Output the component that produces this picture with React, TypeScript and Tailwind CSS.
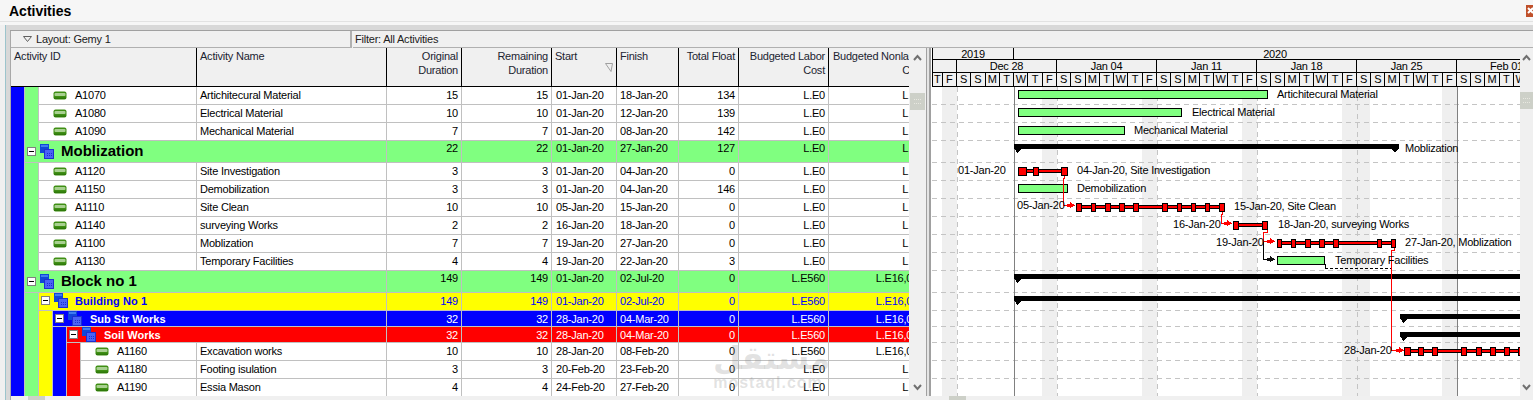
import React from "react";

type Row = {
  strips: string[];
  kind: "leaf" | "group";
  h: string;
  id?: string;
  title?: string;
  titleCls?: string;
  name?: string;
  vals: string[];
  bg?: string;
  text?: string;
};

const BLUE = "bg-[#0000ff]";
const GREEN = "bg-[#80ff80]";
const YEL = "bg-[#ffff00]";
const RED = "bg-[#ff0000]";

const leaf = (strips: string[], id: string, name: string, vals: string[]): Row => ({ strips, kind: "leaf", h: "h-[18px]", id, name, vals });

const A = [BLUE, GREEN];
const B = [BLUE, GREEN, YEL, BLUE, RED];

const rows: Row[] = [
  leaf(A, "A1070", "Artichitecural Material", ["15", "15", "01-Jan-20", "18-Jan-20", "134", "L.E0", "L.E0"]),
  leaf(A, "A1080", "Electrical Material", ["10", "10", "01-Jan-20", "12-Jan-20", "139", "L.E0", "L.E0"]),
  leaf(A, "A1090", "Mechanical Material", ["7", "7", "01-Jan-20", "08-Jan-20", "142", "L.E0", "L.E0"]),
  { strips: [BLUE], kind: "group", h: "h-[22px]", title: "Moblization", titleCls: "text-[15px] tracking-normal font-bold text-black pl-[36px] leading-[20px]", vals: ["22", "22", "01-Jan-20", "27-Jan-20", "127", "L.E0", "L.E0"], bg: GREEN, text: "text-black leading-[15px]" },
  leaf(A, "A1120", "Site Investigation", ["3", "3", "01-Jan-20", "04-Jan-20", "0", "L.E0", "L.E0"]),
  leaf(A, "A1150", "Demobilization", ["3", "3", "01-Jan-20", "04-Jan-20", "146", "L.E0", "L.E0"]),
  leaf(A, "A1110", "Site Clean", ["10", "10", "05-Jan-20", "15-Jan-20", "0", "L.E0", "L.E0"]),
  leaf(A, "A1140", "surveying Works", ["2", "2", "16-Jan-20", "18-Jan-20", "0", "L.E0", "L.E0"]),
  leaf(A, "A1100", "Moblization", ["7", "7", "19-Jan-20", "27-Jan-20", "0", "L.E0", "L.E0"]),
  leaf(A, "A1130", "Temporary Facilities", ["4", "4", "19-Jan-20", "22-Jan-20", "3", "L.E0", "L.E0"]),
  { strips: [BLUE], kind: "group", h: "h-[22px]", title: "Block no 1", titleCls: "text-[15px] tracking-normal font-bold text-black pl-[36px] leading-[20px]", vals: ["149", "149", "01-Jan-20", "02-Jul-20", "0", "L.E560", "L.E16,000"], bg: GREEN, text: "text-black leading-[15px]" },
  { strips: [BLUE, GREEN], kind: "group", h: "h-[18px]", title: "Building No 1", titleCls: "text-[11px] tracking-[0.1px] font-bold text-[#0000ff] pl-[36px] leading-[17px]", vals: ["149", "149", "01-Jan-20", "02-Jul-20", "0", "L.E560", "L.E16,000"], bg: YEL, text: "text-[#0000ff] leading-[17px]" },
  { strips: [BLUE, GREEN, YEL], kind: "group", h: "h-[16px]", title: "Sub Str Works", titleCls: "text-[11px] tracking-normal font-bold text-white pl-[37px] leading-[16px]", vals: ["32", "32", "28-Jan-20", "04-Mar-20", "0", "L.E560", "L.E16,000"], bg: BLUE, text: "text-white leading-[16px]" },
  { strips: [BLUE, GREEN, YEL, BLUE], kind: "group", h: "h-[16px]", title: "Soil Works", titleCls: "text-[11px] tracking-normal font-bold text-white pl-[37px] leading-[16px]", vals: ["32", "32", "28-Jan-20", "04-Mar-20", "0", "L.E560", "L.E16,000"], bg: RED, text: "text-white leading-[16px]" },
  leaf(B, "A1160", "Excavation works", ["10", "10", "28-Jan-20", "08-Feb-20", "0", "L.E560", "L.E16,000"]),
  leaf(B, "A1180", "Footing isulation", ["3", "3", "20-Feb-20", "23-Feb-20", "0", "L.E0", "L.E0"]),
  leaf(B, "A1190", "Essia Mason", ["4", "4", "24-Feb-20", "27-Feb-20", "0", "L.E0", "L.E0"]),
];

const valCols = [
  "w-[75px] text-right pr-[3px]",
  "w-[90px] text-right pr-[3px]",
  "w-[65px] text-left pl-[4px]",
  "w-[62px] text-left pl-[3px]",
  "w-[60px] text-right pr-[3px]",
  "w-[90px] text-right pr-[3px]",
  "w-[98px] text-right pr-[3px]",
];

const TaskIcon = () => (
  <svg width="14" height="9" viewBox="0 0 14 9" className="shrink-0">
    <rect x="0.5" y="0.5" width="13" height="8" rx="2" fill="#3f8f14" />
    <rect x="1.5" y="2" width="11" height="3" rx="1" fill="#a8d090" />
    <rect x="1" y="6.5" width="12" height="1.5" fill="#2f7a0a" />
  </svg>
);

const GroupIcon = () => (
  <svg width="14" height="15" viewBox="0 0 14 15" className="shrink-0" shapeRendering="crispEdges">
    <rect x="0" y="0" width="9" height="9" fill="#1047d8" />
    <rect x="1" y="1" width="7" height="2" fill="#3f7cf0" />
    <rect x="4" y="5" width="10" height="10" fill="#1c2fd0" />
    <rect x="5" y="6" width="8" height="8" fill="#4a63f5" />
    <rect x="7" y="9" width="1" height="1" fill="#1c2fd0" />
    <rect x="9" y="9" width="1" height="1" fill="#1c2fd0" />
    <rect x="11" y="9" width="1" height="1" fill="#1c2fd0" />
    <rect x="7" y="11" width="1" height="1" fill="#1c2fd0" />
    <rect x="9" y="11" width="1" height="1" fill="#1c2fd0" />
    <rect x="11" y="11" width="1" height="1" fill="#1c2fd0" />
  </svg>
);

const MinusBox = () => (
  <div className="w-[9px] h-[9px] border border-[#808080] bg-white flex items-center justify-center shrink-0">
    <div className="w-[5px] h-px bg-black" />
  </div>
);

const Chevron = ({ down }: { down?: boolean }) => (
  <svg width="9" height="7" viewBox="0 0 9 7" className="block">
    <polyline points={down ? "1,1 4.5,5 8,1" : "1,6 4.5,2 8,6"} fill="none" stroke="#707070" strokeWidth="2" />
  </svg>
);

const Thumb = ({ cls }: { cls: string }) => (
  <div className={"bg-[#cdd0c8] flex items-center justify-center " + cls}>
    <div className="w-[7px] h-[5px] border-y border-dotted border-[#e8e8e0]" />
  </div>
);

const RowView = ({ r }: { r: Row }) => (
  <div className={"flex " + r.h}>
    {r.strips.map((s, i) => (
      <div key={i} className={"w-[14px] shrink-0 border-r border-[#c0c0c0] " + s} />
    ))}
    <div className={"flex-1 flex border-b border-[#c0c0c0] min-w-0 " + (r.bg ?? "bg-white") + " " + (r.text ?? "text-black leading-[17px]")}>
      {r.kind === "leaf" ? (
        <>
          <div style={{ width: 186 - 14 * r.strips.length }} className="shrink-0 relative flex items-center pl-[14px] border-r border-[#c0c0c0] gap-[8px]">
            <TaskIcon />
            <span>{r.id}</span>
          </div>
          <div className="w-[190px] shrink-0 pl-[3px] border-r border-[#c0c0c0] whitespace-nowrap">{r.name}</div>
        </>
      ) : (
        <div style={{ width: 376 - 14 * r.strips.length }} className="shrink-0 relative flex items-start border-r border-[#c0c0c0] whitespace-nowrap">
          <div className={"flex items-center gap-[4px] pl-[2px] absolute top-0 left-0 " + (r.h === "h-[22px]" ? "h-[20px]" : "h-[15px]")}>
            <MinusBox />
            <GroupIcon />
          </div>
          <span className={r.titleCls}>{r.title}</span>
        </div>
      )}
      {r.vals.map((v, i) => (
        <div key={i} className={"shrink-0 whitespace-nowrap " + valCols[i] + (i < 6 ? " border-r border-[#c0c0c0]" : "")}>
          {v}
        </div>
      ))}
    </div>
  </div>
);

const HeadCell = ({ cls, lines, children }: { cls: string; lines: string[]; children?: React.ReactNode }) => (
  <div className={"relative shrink-0 h-full border-r border-black pt-[1px] leading-[14px] whitespace-nowrap text-[#1c2430] " + cls}>
    {lines.map((l, i) => (
      <div key={i}>{l}</div>
    ))}
    {children}
  </div>
);

const days = ["S", "S", "M", "T", "W", "T", "F"];
const dayCells: string[] = ["T", "F"];
for (let w = 0; w < 9; w++) dayCells.push(...days);

const Timeline = () => (
  <div className="h-[39px] flex flex-col bg-[#f0f0f0] text-black overflow-hidden border-b border-l border-black leading-[12px]">
    <div className="h-[12px] flex border-b border-black">
      <div className="w-[81px] shrink-0 text-center border-r border-black">2019</div>
      <div className="w-[522px] shrink-0 text-center">2020</div>
    </div>
    <div className="h-[13px] flex border-b border-black">
      <div className="w-[24px] shrink-0 border-r border-black" />
      {["Dec 28", "Jan 04", "Jan 11", "Jan 18", "Jan 25", "Feb 01"].map((m) => (
        <div key={m} className="w-[100px] shrink-0 text-center border-r border-black">
          {m}
        </div>
      ))}
    </div>
    <div className="h-[13px] flex">
      {dayCells.map((d, i) => (
        <div key={i} style={{ width: i === 0 ? 9.7 : 14.2857 }} className="shrink-0 text-center border-r border-black">
          {d}
        </div>
      ))}
    </div>
  </div>
);

const gridY = [104, 122, 140, 162, 180, 198, 216, 234, 252, 270, 292, 310, 326, 342, 360, 378];
const bands: [number, number][] = [[942, 957], [1042, 1057], [1142, 1157], [1242, 1257], [1342, 1370], [1442, 1457]];

const Bar = ({ x1, x2, y }: { x1: number; x2: number; y: number }) => (
  <rect x={x1 + 0.5} y={y + 0.5} width={x2 - x1 - 1} height={8} fill="#80ff80" stroke="#000" />
);

const Summary = ({ x1, x2, y, endTri = true }: { x1: number; x2: number; y: number; endTri?: boolean }) => (
  <g>
    <rect x={x1} y={y} width={x2 - x1} height={5} fill="#000" />
    <polygon points={`${x1},${y + 4} ${x1 + 8},${y + 4} ${x1 + 3.5},${y + 9}`} fill="#000" />
    {endTri && <polygon points={`${x2 - 8},${y + 4} ${x2},${y + 4} ${x2 - 4},${y + 9}`} fill="#000" />}
  </g>
);

const Chain = ({ x1, x2, y, marks }: { x1: number; x2: number; y: number; marks: [number, number][] }) => (
  <g>
    <rect x={x1} y={y + 2} width={x2 - x1} height={4} fill="#000" />
    <rect x={x1} y={y + 3} width={x2 - x1} height={2} fill="#ff0000" />
    {marks.map(([a, b], i) => (
      <rect key={i} x={a + 0.5} y={y + 0.5} width={b - a} height={8} fill="#ff0000" stroke="#000" />
    ))}
  </g>
);

const Arrow = ({ x, y, c = "#ff0000" }: { x: number; y: number; c?: string }) => (
  <g>
    <rect x={x} y={y - 1} width={4} height={3} fill={c} />
    <polygon points={`${x + 3},${y - 3} ${x + 8},${y + 0.5} ${x + 3},${y + 3}`} fill={c} />
  </g>
);

const Label = ({ x, y, children }: { x: number; y: number; children: React.ReactNode }) => (
  <text x={x} y={y + 4} fill="#000" className="text-[11px] tracking-[-0.22px]" style={{ fontFamily: '"Liberation Sans", sans-serif' }}>
    {children}
  </text>
);

const Gantt = () => (
  <svg width="588" height="309" viewBox="932 87 588 309" className="block" shapeRendering="crispEdges">
    {bands.map(([a, b]) => (
      <rect key={a} x={a} y={87} width={b - a} height={309} fill="#efefef" />
    ))}
    {gridY.map((y) => (
      <line key={y} x1={932} x2={1520} y1={y + 0.5} y2={y + 0.5} stroke="#c4c4c4" strokeDasharray="5 4" />
    ))}
    {[957, 1057, 1157, 1257, 1357].map((x) => (
      <line key={x} x1={x + 0.5} x2={x + 0.5} y1={87} y2={396} stroke="#c4c4c4" strokeDasharray="5 4" />
    ))}
    <line x1={1014.5} x2={1014.5} y1={87} y2={396} stroke="#808080" />
    <line x1={1457.5} x2={1457.5} y1={87} y2={396} stroke="#808080" />

    <Bar x1={1018} x2={1268} y={90} />
    <Bar x1={1018} x2={1182} y={108} />
    <Bar x1={1018} x2={1125} y={126} />
    <Bar x1={1018} x2={1068} y={184} />
    <Bar x1={1277} x2={1325} y={256} />

    <Summary x1={1014} x2={1399} y={144} />
    <Summary x1={1014} x2={1520} y={274} endTri={false} />
    <Summary x1={1014} x2={1520} y={296} endTri={false} />
    <Summary x1={1400} x2={1520} y={314} endTri={false} />
    <Summary x1={1400} x2={1520} y={332} endTri={false} />

    <polyline points="1064.5,175 1064.5,178 1063.5,178 1063.5,205 1068,205" fill="none" stroke="#ff0000" />
    <polyline points="1222.5,211 1222.5,214 1221.5,214 1221.5,223 1225,223" fill="none" stroke="#ff0000" />
    <polyline points="1263.5,241 1263.5,259 1268,259" fill="none" stroke="#000" />
    <polyline points="1267.5,229 1267.5,232 1263.5,232 1263.5,241 1268,241" fill="none" stroke="#ff0000" />
    <polyline points="1325.5,264 1325.5,268.5" fill="none" stroke="#000" />
    <line x1={1325} x2={1391} y1={268.5} y2={268.5} stroke="#000" strokeDasharray="3 2" />
    <polyline points="1394.5,247 1394.5,250 1391.5,250 1391.5,350 1396,350" fill="none" stroke="#ff0000" />

    <Arrow x={1067} y={205} />
    <Arrow x={1224} y={223} />
    <Arrow x={1267} y={241} />
    <Arrow x={1267} y={259} c="#111" />
    <Arrow x={1396} y={350} />

    <Chain x1={1020} x2={1066} y={167} marks={[[1018, 1026], [1033, 1038], [1061, 1067]]} />
    <Chain x1={1078} x2={1224} y={203} marks={[[1076, 1081], [1091, 1095], [1105, 1110], [1119, 1124], [1133, 1138], [1162, 1167], [1177, 1181], [1191, 1195], [1205, 1209], [1219, 1224]]} />
    <Chain x1={1234} x2={1266} y={221} marks={[[1233, 1238], [1262, 1267]]} />
    <Chain x1={1278} x2={1394} y={239} marks={[[1277, 1281], [1291, 1295], [1305, 1310], [1319, 1324], [1333, 1338], [1377, 1381], [1391, 1395]]} />
    <Chain x1={1405} x2={1520} y={347} marks={[[1404, 1410], [1418, 1423], [1432, 1437], [1461, 1466], [1476, 1481], [1490, 1495], [1504, 1509], [1518, 1524]]} />

    <g shapeRendering="auto">
      <Label x={1277} y={94}>Artichitecural Material</Label>
      <Label x={1192} y={112}>Electrical Material</Label>
      <Label x={1134} y={130}>Mechanical Material</Label>
      <Label x={1405} y={148}>Moblization</Label>
      <Label x={958} y={170}>01-Jan-20</Label>
      <Label x={1077} y={170}>04-Jan-20, Site Investigation</Label>
      <Label x={1077} y={188}>Demobilization</Label>
      <Label x={1017} y={205}>05-Jan-20</Label>
      <Label x={1234} y={206}>15-Jan-20, Site Clean</Label>
      <Label x={1173} y={224}>16-Jan-20</Label>
      <Label x={1278} y={224}>18-Jan-20, surveying Works</Label>
      <Label x={1216} y={242}>19-Jan-20</Label>
      <Label x={1405} y={242}>27-Jan-20, Moblization</Label>
      <Label x={1335} y={260}>Temporary Facilities</Label>
      <Label x={1344} y={350}>28-Jan-20</Label>
    </g>
  </svg>
);

export default function App() {
  return (
    <div className="relative w-[1533px] h-[400px] overflow-hidden bg-[#f0f0f0] text-[11px] tracking-[-0.22px] text-black" style={{ fontFamily: '"Liberation Sans", Arial, sans-serif' }}>
      <div className="h-[25px] bg-[#f6f6f6]">
        <div className="h-[22px] border-b border-[#e2e2e2] flex items-center justify-between pl-[9px]">
          <span className="text-[14px] tracking-normal font-bold pt-[1px]">Activities</span>
          <div className="w-[7px] h-[12px] overflow-hidden bg-[#c0502a]">
            <svg width="7" height="12" viewBox="0 0 7 12">
              <path d="M2 3 L7 8 M7 3 L2 8" stroke="#fff" strokeWidth="2" fill="none" />
            </svg>
          </div>
        </div>
      </div>
      <div className="flex h-[375px] pl-[5px]">
        <div className="w-[5px] shrink-0 border-l border-[#9cc4cc] bg-[#d8d8d8]" />
        <div className="flex-1 min-w-0 flex flex-col">
          <div className="h-[6px] shrink-0 bg-[#d8d8d8] border-b border-[#a0a0a0]" />
          <div className="flex-1 min-h-0 flex flex-col border-l border-[#a8a8a8] relative">
            <div className="h-[17px] shrink-0 flex leading-[16px] text-[#222]">
              <div className="w-[341px] shrink-0 border-r-2 border-b border-[#b0b0b0] flex items-center pl-[12px] gap-[4px]">
                <svg width="9" height="6" viewBox="0 0 9 6">
                  <polygon points="0.5,0.5 8.5,0.5 4.5,5.5" fill="none" stroke="#606060" />
                </svg>
                <span>Layout: Gemy 1</span>
              </div>
              <div className="flex-1 pl-[2px] border-b border-[#b0b0b0] ml-[1px]">Filter: All Activities</div>
            </div>
            <div className="flex h-[348px] shrink-0">
              <div className="w-[898px] shrink-0 overflow-hidden">
                <div className="h-[39px] flex border-b border-black bg-[#f0f0f0]">
                  <HeadCell cls="w-[186px] pl-[3px]" lines={["Activity ID"]} />
                  <HeadCell cls="w-[190px] pl-[3px]" lines={["Activity Name"]} />
                  <HeadCell cls="w-[75px] text-right pr-[3px]" lines={["Original", "Duration"]} />
                  <HeadCell cls="w-[90px] text-right pr-[3px]" lines={["Remaining", "Duration"]} />
                  <HeadCell cls="w-[65px] pl-[3px]" lines={["Start"]}>
                    <svg width="8" height="9" viewBox="0 0 8 9" className="absolute right-[3px] top-[15px]">
                      <polygon points="0.5,0.5 7.5,0.5 6,8.5" fill="none" stroke="#a0a0a0" />
                    </svg>
                  </HeadCell>
                  <HeadCell cls="w-[62px] pl-[3px]" lines={["Finish"]} />
                  <HeadCell cls="w-[60px] text-right pr-[3px]" lines={["Total Float"]} />
                  <HeadCell cls="w-[90px] text-right pr-[3px]" lines={["Budgeted Labor", "Cost"]} />
                  <div className="relative shrink-0 w-[98px] h-full pt-[1px] leading-[14px] whitespace-nowrap text-right pr-[3px] text-[#1c2430]">
                    <div>Budgeted Nonlabor</div>
                    <div>Cost</div>
                  </div>
                </div>
                {rows.map((r, i) => (
                  <RowView key={i} r={r} />
                ))}
              </div>
              <div className="w-[17px] shrink-0 bg-[#f0f0f0] flex flex-col items-center">
                <div className="h-[39px] pt-[6px]">
                  <Chevron />
                </div>
                <div className="h-[6px]" />
                <Thumb cls="w-[15px] h-[17px]" />
                <div className="flex-1" />
                <div className="pb-[5px]">
                  <Chevron down />
                </div>
              </div>
              <div className="w-[6px] shrink-0 flex">
                <div className="w-px bg-[#a0a0a0]" />
                <div className="w-[2px] bg-[#e4e4e4]" />
                <div className="w-[2px] bg-[#a0a0a0]" />
                <div className="w-px bg-white" />
              </div>
              <div className="w-[588px] shrink-0 bg-white">
                <Timeline />
                <Gantt />
              </div>
              <div className="flex-1 bg-[#f0f0f0] flex flex-col items-center">
                <div className="h-[39px] pt-[6px]">
                  <Chevron />
                </div>
                <div className="h-[5px]" />
                <Thumb cls="w-full h-[17px]" />
                <div className="flex-1" />
                <div className="pb-[5px]">
                  <Chevron down />
                </div>
              </div>
            </div>
            <div className="h-[4px] shrink-0 flex">
              <div className="w-[17px] shrink-0" />
              <div className="w-[17px] shrink-0 bg-[#cdd0c8]" />
              <div className="w-[904px] shrink-0" />
              <div className="w-[17px] shrink-0 bg-[#cdd0c8]" />
            </div>
            <div className="absolute left-[702px] top-[309px] w-[110px] pointer-events-none text-center text-[#8c8c8c]/25 font-bold tracking-normal whitespace-nowrap">
              <div className="text-[32px] leading-[36px]" style={{ fontFamily: '"DejaVu Sans", sans-serif' }}>مستقل</div>
              <div className="text-[16px] leading-[14px] tracking-[1px]">mostaql.com</div>
            </div>
          </div>
        </div>
      </div>
    </div>
  );
}
